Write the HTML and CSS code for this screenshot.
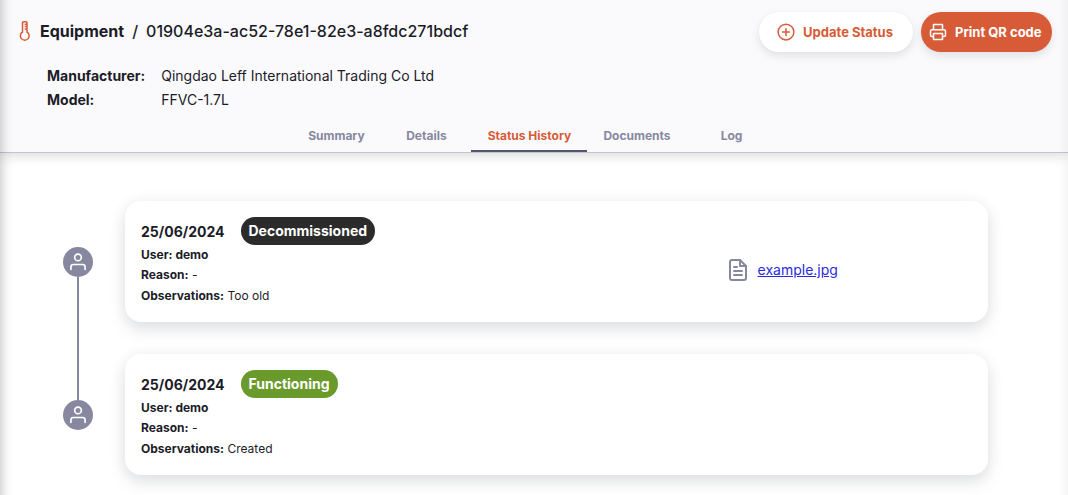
FILE: index.html
```html
<!DOCTYPE html>
<html lang="en">
<head>
<meta charset="utf-8">
<title>Equipment - Status History</title>
<link rel="stylesheet" href="styles.css">
</head>
<body>
<div class="page">
  <header class="header">
    <div class="topbar">
      <h1 class="breadcrumb">
        <svg class="thermo" width="12" height="20" viewBox="0 0 12 20" fill="none" stroke="currentColor" stroke-width="1.5">
          <path d="M3.5 11V1.800Q3.500.8 4.500.8h2.500Q8 .8 8 1.800v9.200a4.400 4.400 0 1 1-4.500 0z"/>
          <path d="M5.700 3.200h2.300M5.700 5.600h2.300M5.700 8h2.300"/>
        </svg>
        <span class="section">Equipment</span>
        <span class="slash">/</span>
        <span class="code">01904e3a-ac52-78e1-82e3-a8fdc271bdcf</span>
      </h1>
      <div class="actions">
        <button class="button" type="button">
          <svg width="18" height="18" viewBox="0 0 24 24" fill="none" stroke="currentColor" stroke-width="2" stroke-linecap="round" stroke-linejoin="round"><circle cx="12" cy="12" r="10.5"/><path d="M12 7.500v9M7.500 12h9"/></svg>
          Update Status
        </button>
        <button class="button primary" type="button">
          <svg width="18" height="18" viewBox="0 0 24 24" fill="none" stroke="currentColor" stroke-width="2" stroke-linecap="round" stroke-linejoin="round"><path d="M6 9V2h12v7M6 18H4a2 2 0 0 1-2-2v-5a2 2 0 0 1 2-2h16a2 2 0 0 1 2 2v5a2 2 0 0 1-2 2h-2"/><path d="M6 14h12v8H6z"/></svg>
          Print QR code
        </button>
      </div>
    </div>
    <dl class="facts">
      <dt>Manufacturer:</dt><dd>Qingdao Leff International Trading Co Ltd</dd>
      <dt>Model:</dt><dd>FFVC-1.7L</dd>
    </dl>
    <nav class="tabs">
      <button class="tab" type="button">Summary</button>
      <button class="tab" type="button">Details</button>
      <button class="tab active" type="button">Status History</button>
      <button class="tab" type="button">Documents</button>
      <button class="tab" type="button">Log</button>
    </nav>
  </header>
  <main class="timeline">
    <article class="entry">
      <div class="rail">
        <span class="dot"><svg width="20" height="20" viewBox="0 0 24 24" fill="none" stroke="currentColor" stroke-width="2" stroke-linecap="round" stroke-linejoin="round"><path d="M20.500 21v-3a3 3 0 0 0-3-3h-11a3 3 0 0 0-3 3v3"/><circle cx="12" cy="6.5" r="4"/></svg></span>
      </div>
      <div class="card">
        <div class="info">
          <div class="heading"><time>25/06/2024</time><span class="badge">Decommissioned</span></div>
          <p class="line"><b>User: demo</b></p>
          <p class="line"><b>Reason:</b> -</p>
          <p class="line"><b>Observations:</b> Too old</p>
        </div>
        <div class="files">
          <svg width="20" height="24" viewBox="0 0 20 24" fill="none" stroke="currentColor" stroke-width="2" stroke-linecap="round" stroke-linejoin="round"><path d="M12 2H4a2 2 0 0 0-2 2v16a2 2 0 0 0 2 2h12a2 2 0 0 0 2-2V8z"/><path d="M12 2v6h6M14 13H6M14 17H6M9 9H6"/></svg>
          <a href="#">example.jpg</a>
        </div>
      </div>
    </article>
    <article class="entry">
      <div class="rail">
        <span class="dot"><svg width="20" height="20" viewBox="0 0 24 24" fill="none" stroke="currentColor" stroke-width="2" stroke-linecap="round" stroke-linejoin="round"><path d="M20.500 21v-3a3 3 0 0 0-3-3h-11a3 3 0 0 0-3 3v3"/><circle cx="12" cy="6.5" r="4"/></svg></span>
      </div>
      <div class="card">
        <div class="info">
          <div class="heading"><time>25/06/2024</time><span class="badge ok">Functioning</span></div>
          <p class="line"><b>User: demo</b></p>
          <p class="line"><b>Reason:</b> -</p>
          <p class="line"><b>Observations:</b> Created</p>
        </div>
      </div>
    </article>
  </main>
</div>
</body>
</html>
```
FILE: styles.css
```css
* { box-sizing: border-box; }
body {
  margin: 0;
  font-family: Inter, "Liberation Sans", sans-serif;
  font-size: 14px;
  color: #1c1c28;
  background: #fff;
}
.page { position: relative; min-height: 100vh; overflow: hidden; }
/* soft shade along both sides of the content area */
.page::after {
  content: "";
  position: absolute;
  inset: -20px 0;
  pointer-events: none;
  box-shadow: inset 7px 0 12px -6px rgba(0, 0, 0, .26), inset -7px 0 12px -6px rgba(0, 0, 0, .08);
}
.header {
  background: #fafafc;
  border-bottom: 1px solid #c4c4cf;
  box-shadow: 0 2px 12px rgba(0, 0, 0, .16);
}
.topbar {
  display: flex;
  justify-content: space-between;
  align-items: flex-start;
  padding: 12px 16px 0 19px;
}
.breadcrumb {
  display: flex;
  align-items: center;
  gap: 8px;
  margin: 0;
  font-size: 16px;
  line-height: 38px;
  font-weight: 500;
}
.thermo { margin-right: 1px; color: #d75b36; }
.section { font-weight: 700; }
.actions { display: flex; gap: 8px; }
.button {
  display: flex;
  align-items: center;
  gap: 8px;
  height: 40px;
  min-width: 131px;
  padding: 0 20px 0 18px;
  border: 0;
  border-radius: 24px;
  font: 700 13px/20px Inter, sans-serif;
  color: #d75b36;
  background: #fff;
  box-shadow: 0 4px 8px rgba(96, 97, 112, .16), 0 0 2px rgba(40, 41, 61, .04);
}
.primary { padding: 0 10px 0 8px; color: #fff; background: #d75b36; }
.facts {
  display: grid;
  grid-template-columns: max-content 1fr;
  column-gap: 16px;
  margin: 12px 47px 0;
  line-height: 24px;
}
.facts dt { font-weight: 700; }
.facts dd { margin: 0; }
.tabs { display: flex; justify-content: center; margin-top: 8px; }
.tab {
  min-width: 90px;
  height: 32px;
  padding: 2px 16px 0;
  border: 0;
  border-bottom: 2px solid transparent;
  background: none;
  font: 700 12px/16px Inter, sans-serif;
  color: #8788a0;
}
.tab.active { min-width: 116px; color: #d75b36; border-color: #555770; }
.timeline { padding: 32px 80px 3px 63px; }
.entry { display: flex; gap: 32px; }
.rail {
  display: flex;
  flex-direction: column;
  align-items: center;
  width: 30px;
}
.rail::before, .rail::after {
  content: "";
  flex: 1;
  width: 2px;
  background: #8788a0;
}
.entry:first-child .rail::before, .entry:last-child .rail::after { background: none; }
.dot {
  display: flex;
  align-items: center;
  justify-content: center;
  width: 30px;
  height: 30px;
  border-radius: 50%;
  color: #fff;
  background: #8788a0;
}
.card {
  flex: 1;
  display: grid;
  grid-template-columns: 12fr 5fr;
  align-items: center;
  margin: 16px 0;
  padding: 16px;
  border-radius: 16px;
  background: #fff;
  box-shadow: 0 8px 16px rgba(96, 97, 112, .16), 0 0 16px rgba(40, 41, 61, .05);
}
.heading { display: flex; align-items: center; gap: 16px; font-weight: 700; }
.badge {
  padding: 0 8px;
  border-radius: 14px;
  line-height: 28px;
  color: #fff;
  background: #2b2b2b;
}
.badge.ok { background: #6a9a2b; }
.line { margin: 0; font-size: 12px; line-height: 20px; }
.line:last-child { margin-top: 1px; }
.files { display: flex; align-items: center; gap: 10px; padding-top: 16px; color: #8788a0; }
.files a { color: #2a2ae0; }
```
